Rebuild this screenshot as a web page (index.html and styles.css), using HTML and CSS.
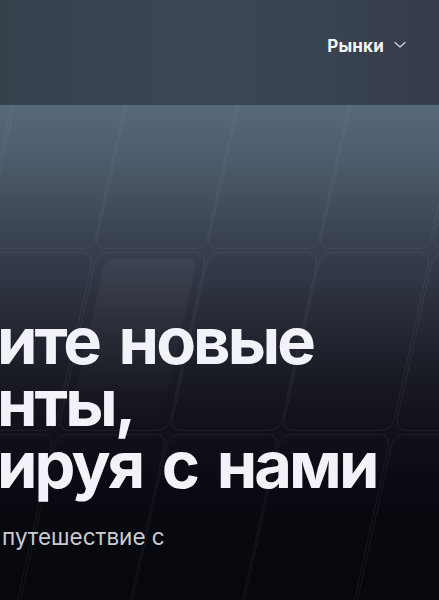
FILE: index.html
```html
<!DOCTYPE html>
<html lang="ru">
<head>
<meta charset="utf-8">
<title>Рынки</title>
<link rel="stylesheet" href="styles.css">
</head>
<body>
<div class="page">
  <header class="topbar">
    <nav class="nav">
      <a class="nav-item" href="#">Рынки
        <svg class="chev" width="12" height="8" viewBox="0 0 12 8" aria-hidden="true"><path d="M1 1.5 L6 6 L11 1.5" fill="none" stroke="currentColor" stroke-width="1.4" stroke-linecap="round" stroke-linejoin="round"/></svg>
      </a>
    </nav>
  </header>
  <section class="hero">
    <svg class="grid" viewBox="0 104 439 496" preserveAspectRatio="none" aria-hidden="true">
      <defs>
        <linearGradient id="hl" x1="0" y1="0" x2="0" y2="1">
          <stop offset="0" stop-color="#ffffff" stop-opacity="0.045"/>
          <stop offset="0.6" stop-color="#ffffff" stop-opacity="0.02"/>
          <stop offset="1" stop-color="#ffffff" stop-opacity="0"/>
        </linearGradient>
      </defs>
      <g transform="skewX(-12.4)" fill="none" stroke="#ffffff" stroke-opacity="0.065" stroke-width="1">
        <rect x="-75.6" y="40" width="110" height="208" rx="11" vector-effect="non-scaling-stroke"/>
        <rect x="37.4" y="40" width="110" height="208" rx="11" vector-effect="non-scaling-stroke"/>
        <rect x="149.4" y="40" width="110" height="208" rx="11" vector-effect="non-scaling-stroke"/>
        <rect x="261.4" y="40" width="110" height="208" rx="11" vector-effect="non-scaling-stroke"/>
        <rect x="373.4" y="40" width="110" height="208" rx="11" vector-effect="non-scaling-stroke"/>
        <rect x="486.4" y="40" width="110" height="208" rx="11" vector-effect="non-scaling-stroke"/>

        <rect x="-73.6" y="252" width="110" height="178" rx="11" vector-effect="non-scaling-stroke"/>
        <rect x="39.4" y="252" width="110" height="178" rx="11" vector-effect="non-scaling-stroke"/>
        <rect x="152.4" y="252" width="110" height="178" rx="11" vector-effect="non-scaling-stroke"/>
        <rect x="264.4" y="252" width="110" height="178" rx="11" vector-effect="non-scaling-stroke"/>
        <rect x="376.4" y="252" width="110" height="178" rx="11" vector-effect="non-scaling-stroke"/>
        <rect x="489.4" y="252" width="110" height="178" rx="11" vector-effect="non-scaling-stroke"/>

        <rect x="-73.6" y="434" width="110" height="200" rx="11" vector-effect="non-scaling-stroke"/>
        <rect x="39.4" y="434" width="110" height="200" rx="11" vector-effect="non-scaling-stroke"/>
        <rect x="152.4" y="434" width="110" height="200" rx="11" vector-effect="non-scaling-stroke"/>
        <rect x="264.4" y="434" width="110" height="200" rx="11" vector-effect="non-scaling-stroke"/>
        <rect x="376.4" y="434" width="110" height="200" rx="11" vector-effect="non-scaling-stroke"/>
        <rect x="489.4" y="434" width="110" height="200" rx="11" vector-effect="non-scaling-stroke"/>
      </g>
      <g transform="skewX(-12.4)">
        <rect x="162" y="258" width="92" height="166" rx="9" fill="url(#hl)"/>
      </g>
    </svg>
    <div class="hero-content">
      <h1 class="title">
        <span class="line">ите новые</span>
        <span class="line">нты,</span>
        <span class="line">ируя с нами</span>
      </h1>
      <p class="subtitle">путешествие с</p>
    </div>
  </section>
</div>
</body>
</html>
```
FILE: styles.css
```css
* { box-sizing: border-box; }
html, body { margin: 0; padding: 0; }
body {
  background: #07080e;
  font-family: "Inter", "Noto Sans", sans-serif;
  overflow: hidden;
}
.page {
  width: 439px;
  height: 600px;
  display: flex;
  flex-direction: column;
  overflow: hidden;
}
.topbar {
  height: 104px;
  flex: none;
  background: linear-gradient(90deg, #36414c 0%, #3b4753 45%, #384450 75%, #363b48 100%);
  display: flex;
  justify-content: flex-end;
  padding: 36px 33px 0 0;
}
.nav { display: flex; }
.nav-item {
  display: flex;
  align-items: center;
  gap: 10px;
  color: #f3f5f8;
  text-decoration: none;
  font-weight: 700;
  font-size: 17px;
  letter-spacing: 0.2px;
  height: 20px;
}
.chev { color: #c9ced6; margin-top: -2px; }
.hero {
  position: relative;
  flex: 1;
  border-top: 1px solid rgba(110, 140, 160, 0.45);
  background: linear-gradient(180deg, #56697b 0%, #4a5767 14%, #363d4b 30%, #282c38 42%, #1c1e28 52%, #12131b 62%, #0c0d15 72%, #08090f 84%, #07080e 100%);
}
.grid {
  position: absolute;
  inset: 0;
  width: 100%;
  height: 100%;
}
.hero-content {
  position: relative;
  padding: 205px 0 0 0;
}
.title {
  margin: 0 0 0 -3px;
  display: flex;
  flex-direction: column;
  font-family: "Inter", sans-serif;
  font-weight: 700;
  font-size: 65px;
  line-height: 62px;
  letter-spacing: -2.9px;
  word-spacing: 7px;
  color: #f1f3f9;
  white-space: nowrap;
}
.subtitle {
  margin: 27px 0 0 2px;
  font-family: "Inter", sans-serif;
  font-weight: 400;
  font-size: 22.5px;
  line-height: 28px;
  color: #c8cbd2;
}
```
